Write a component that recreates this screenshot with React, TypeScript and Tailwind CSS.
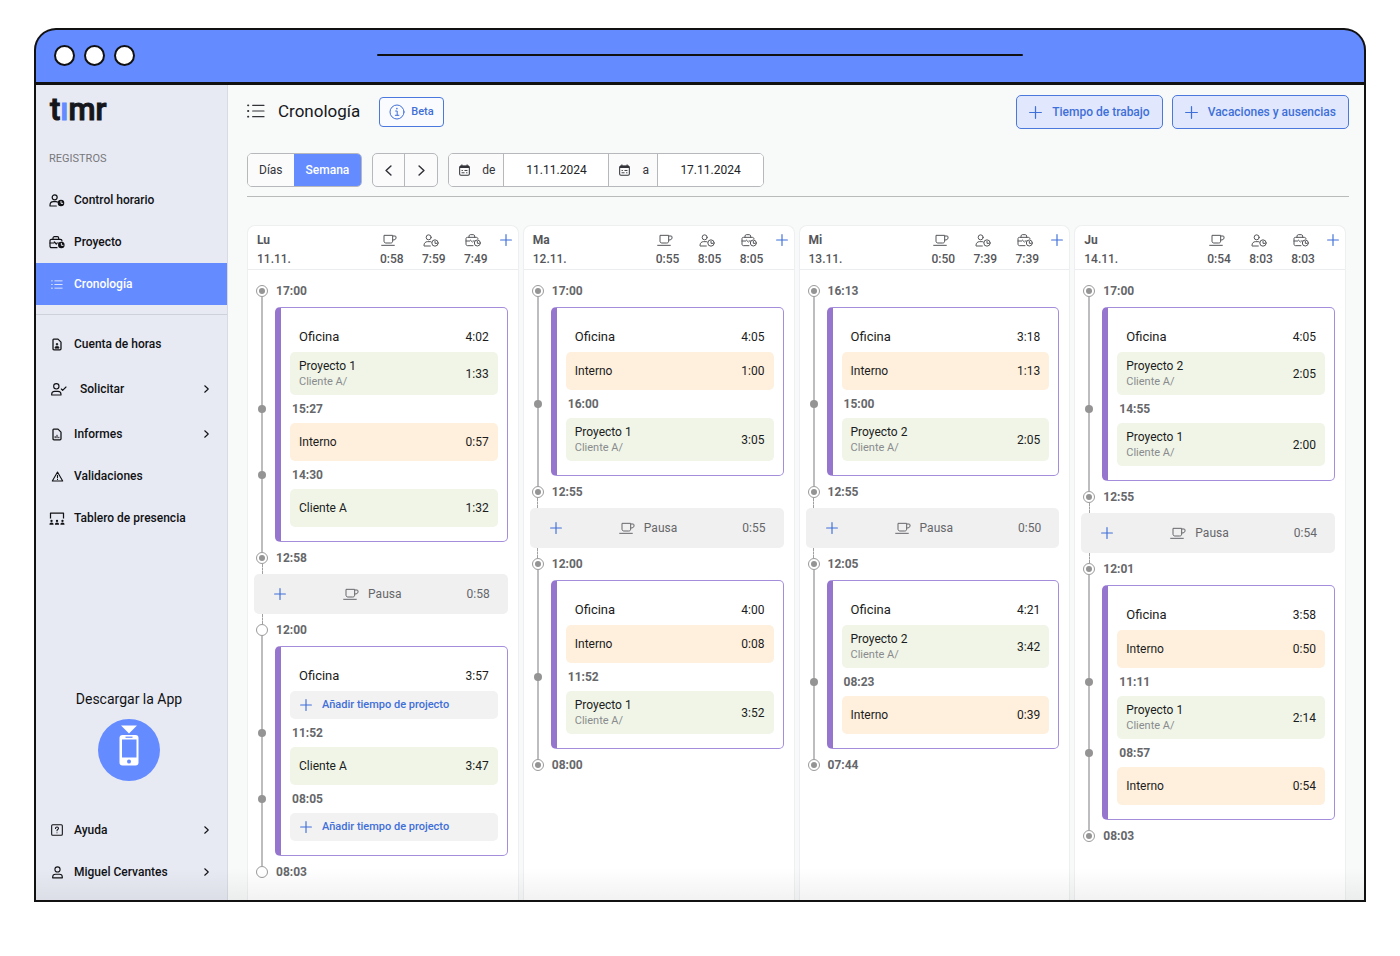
import type { ReactNode } from 'react';

type IconProps = { className?: string };

/* ---------- icons ---------- */

function Cup({ className = 'h-[13px] w-4' }: IconProps) {
  return (
    <svg viewBox="0 0 48 39" fill="none" stroke="currentColor" strokeWidth="3" className={className} aria-hidden="true">
      <path d="M9 4h26v17c0 4-2 6-6 6H15c-4 0-6-2-6-6z" />
      <path d="M35 6h7c2 0 3 1 3 3v3c0 4-4 6-10 6" />
      <path d="M2 34h38" strokeLinecap="round" />
    </svg>
  );
}

function PersonClock({ solid = false }: { solid?: boolean }) {
  return (
    <svg viewBox="0 0 48 39" fill="none" stroke="currentColor" strokeWidth={solid ? 3.6 : 3} strokeLinecap="round" strokeLinejoin="round" className="h-[13px] w-4" aria-hidden="true">
      <circle cx="17" cy="10" r="7.5" />
      <path d="M22 36H3v-2c0-7 5-11 10-11h8c2 0 3 0 4 1" />
      <circle cx="36" cy="27" r={solid ? 8 : 9.5} fill={solid ? 'currentColor' : 'none'} />
      <path d="M36 22v6h5" stroke={solid ? '#e8eaf3' : 'currentColor'} strokeWidth="3" />
    </svg>
  );
}

function CaseClock({ solid = false }: { solid?: boolean }) {
  return (
    <svg viewBox="0 0 48 39" fill="none" stroke="currentColor" strokeWidth={solid ? 3.6 : 3} strokeLinecap="round" strokeLinejoin="round" className="h-[13px] w-4" aria-hidden="true">
      <path d="M12 10V6c0-2 2-4 4-4h9c2 0 4 2 4 4v4" />
      <path d="M24 35H7c-2 0-4-2-4-4V14c0-3 2-4 4-4h27c3 0 5 2 5 5" />
      <path d="M3 21h11M16 18l6 6M24 21h4" />
      <circle cx="37" cy="27" r={solid ? 8 : 9} fill={solid ? 'currentColor' : 'none'} />
      <path d="M37 22v6h5" stroke={solid ? '#e8eaf3' : 'currentColor'} strokeWidth="3" />
    </svg>
  );
}

function Plus({ className = 'size-3' }: IconProps) {
  return (
    <svg viewBox="0 0 12 12" stroke="currentColor" strokeWidth="1.15" strokeLinecap="round" className={className} aria-hidden="true">
      <path d="M6 .6v10.8M.6 6h10.8" />
    </svg>
  );
}

function ListIcon({ className }: IconProps) {
  return (
    <svg viewBox="0 0 54 42" fill="none" stroke="currentColor" strokeWidth="3.6" strokeLinecap="round" className={className} aria-hidden="true">
      <path d="M17 4h34M17 21h34M17 38h34" />
      <path d="M3 4h1M3 21h1M3 38h1" strokeWidth="5.5" />
    </svg>
  );
}

function DocIcon({ children }: { children: ReactNode }) {
  return (
    <svg viewBox="0 0 30 38" fill="none" stroke="currentColor" strokeWidth="3.8" strokeLinejoin="round" className="h-[13px] w-[10px]" aria-hidden="true">
      <path d="M5 3h13l9 9v20c0 2-1 3-3 3H6c-2 0-3-1-3-3V5c0-1 1-2 2-2z" />
      {children}
    </svg>
  );
}

function PersonCheck() {
  return (
    <svg viewBox="0 0 48 39" fill="none" stroke="currentColor" strokeWidth="3.4" strokeLinecap="round" strokeLinejoin="round" className="h-[13px] w-4" aria-hidden="true">
      <circle cx="16" cy="10" r="8" />
      <path d="M2 36v-2c0-6 4-9 9-9h10c5 0 9 3 9 9v2z" />
      <path d="M31 18l4 4 10-10" />
    </svg>
  );
}

function Warning() {
  return (
    <svg viewBox="0 0 38 34" fill="none" stroke="currentColor" strokeWidth="3.4" strokeLinecap="round" strokeLinejoin="round" className="h-[11px] w-[13px]" aria-hidden="true">
      <path d="M19 3L35 31H3z" />
      <path d="M19 13v8M19 26v.5" />
    </svg>
  );
}

function Board() {
  return (
    <svg viewBox="0 0 46 38" fill="currentColor" className="h-[13px] w-4" aria-hidden="true">
      <path d="M4 19V3h38v16" fill="none" stroke="currentColor" strokeWidth="3.6" strokeLinejoin="round" />
      <circle cx="7" cy="26" r="3.4" />
      <circle cx="23" cy="26" r="3.4" />
      <circle cx="39" cy="26" r="3.4" />
      <path d="M1 37c0-4 2-6 6-6s6 2 6 6zM17 37c0-4 2-6 6-6s6 2 6 6zM33 37c0-4 2-6 6-6s6 2 6 6z" />
    </svg>
  );
}

function Help() {
  return (
    <svg viewBox="0 0 36 36" fill="none" stroke="currentColor" strokeWidth="3.2" strokeLinecap="round" strokeLinejoin="round" className="size-3" aria-hidden="true">
      <rect x="2" y="2" width="32" height="32" rx="3" />
      <path d="M13.500 13.500c0-3 2-4.500 4.500-4.500s4.500 1.500 4.500 4.200c0 3-4.500 3.300-4.500 7M18 26.200v.3" />
    </svg>
  );
}

function Person() {
  return (
    <svg viewBox="0 0 34 39" fill="none" stroke="currentColor" strokeWidth="3.4" strokeLinejoin="round" className="h-[13px] w-[11px]" aria-hidden="true">
      <circle cx="17" cy="10" r="8" />
      <path d="M2 36v-2c0-6 4-9 9-9h12c5 0 9 3 9 9v2z" />
    </svg>
  );
}

function Chevron({ className = 'h-2 w-[5px]', flip = false }: IconProps & { flip?: boolean }) {
  return (
    <svg viewBox="0 0 10 16" fill="none" stroke="currentColor" strokeWidth="2.200" strokeLinecap="round" strokeLinejoin="round" className={className} aria-hidden="true">
      <path d={flip ? 'M8.500 1.500L1.500 8l7 6.500' : 'M1.500 1.500l7 6.500-7 6.500'} />
    </svg>
  );
}

function Calendar() {
  return (
    <svg viewBox="0 0 34 37" fill="none" stroke="currentColor" strokeWidth="3.2" strokeLinejoin="round" className="h-3 w-[11px]" aria-hidden="true">
      <rect x="2" y="6" width="30" height="29" rx="4" />
      <path d="M3 9h28" strokeWidth="7" />
      <path d="M9 2v6M25 2v6" strokeLinecap="round" />
      <path d="M17 20h9M8 20h4M8 27h9M22 27h4" strokeWidth="2.800" />
    </svg>
  );
}

function Info() {
  return (
    <svg viewBox="0 0 16 16" fill="none" stroke="currentColor" strokeLinecap="round" className="size-4" aria-hidden="true">
      <circle cx="8" cy="8" r="7" strokeWidth="1" />
      <path d="M6.600 7H8.200v4.200M6.300 11.300h3.600" strokeWidth="1" />
      <path d="M7.900 4.600v.1" strokeWidth="1.500" />
    </svg>
  );
}

function PhoneBadge() {
  return (
    <svg viewBox="0 0 62 62" className="size-[62px]" aria-hidden="true">
      <circle cx="31" cy="31" r="31" fill="#648bff" />
      <path d="M23 6.500h16l-8 8z" fill="#fff" />
      <rect x="21.500" y="16" width="19" height="30.500" rx="3" fill="#fff" />
      <rect x="24" y="20.500" width="14.500" height="18" fill="#648bff" />
      <rect x="27.500" y="17.600" width="7" height="1.200" fill="#648bff" />
      <circle cx="31" cy="42.500" r="2" fill="#648bff" />
    </svg>
  );
}

/* ---------- sidebar ---------- */

type NavProps = { icon: ReactNode; label: string; active?: boolean; chevron?: boolean; wide?: boolean };

function NavItem({ icon, label, active, chevron, wide }: NavProps) {
  return (
    <a
      href="#"
      aria-current={active ? 'page' : undefined}
      className={`flex items-center pr-[18px] text-xs font-medium ${wide ? 'h-12 pl-[15px]' : 'h-[42px] pl-[13px]'} ${
        active ? 'bg-[#648bff] text-white' : 'text-[#101114]'
      }`}
    >
      <span className={`flex w-4 shrink-0 justify-center ${wide ? 'mr-[13px]' : 'mr-[9px]'}`}>{icon}</span>
      <span className="flex-1">{label}</span>
      {chevron && <Chevron />}
    </a>
  );
}

function Sidebar() {
  return (
    <aside className="flex w-[192px] shrink-0 flex-col border-r border-[#d9dbe4] bg-[#e8eaf3]">
      <div className="px-[14px] pt-[5px] text-[31px] leading-10 font-medium text-[#15171c] [-webkit-text-stroke:1px_#15171c]">
        t<span className="text-[#648bff] [-webkit-text-stroke:1px_#648bff]">ı</span>mr
      </div>
      <h2 className="mt-[19px] px-[13px] text-[11px] leading-5 text-[#77787c]">REGISTROS</h2>
      <nav className="mt-[10px] flex flex-1 flex-col pb-[7px]">
        <NavItem icon={<PersonClock solid />} label="Control horario" />
        <NavItem icon={<CaseClock solid />} label="Proyecto" />
        <NavItem icon={<ListIcon className="h-[9px] w-3" />} label="Cronología" active />
        <hr className="mt-[9px] mb-2 border-[#cfd1da]" />
        <NavItem
          icon={
            <DocIcon>
              <circle cx="15" cy="18" r="2.500" fill="currentColor" strokeWidth="2" />
              <path d="M9 30c0-4 2-6 6-6s6 2 6 6z" fill="currentColor" strokeWidth="2" />
            </DocIcon>
          }
          label="Cuenta de horas"
        />
        <NavItem icon={<PersonCheck />} label="Solicitar" chevron wide />
        <NavItem
          icon={
            <DocIcon>
              <path d="M9.500 24v6M15 20v10M20.500 26v4" strokeWidth="3" />
            </DocIcon>
          }
          label="Informes"
          chevron
        />
        <NavItem icon={<Warning />} label="Validaciones" />
        <NavItem icon={<Board />} label="Tablero de presencia" />
        <a href="#" className="mt-auto mb-7 flex flex-col items-center gap-[10px] pr-[5px] text-sm leading-5 text-[#101114]">
          Descargar la App
          <PhoneBadge />
        </a>
        <NavItem icon={<Help />} label="Ayuda" chevron />
        <NavItem icon={<Person />} label="Miguel Cervantes" chevron />
      </nav>
    </aside>
  );
}

/* ---------- toolbar ---------- */

function DateField({ label, id, value }: { label: string; id: string; value: string }) {
  return (
    <>
      <label htmlFor={id} className="flex items-center gap-3 border-r border-[#b6b8bc] bg-[#fbfbfc] pr-2 pl-[10px] text-[#333439]">
        <Calendar />
        {label}
      </label>
      <input id={id} defaultValue={value} className="w-[105px] border-r border-[#b6b8bc] bg-white text-center text-[#222327] last:border-r-0" />
    </>
  );
}

function Toolbar() {
  const add = 'flex h-[34px] items-center gap-[10px] rounded-[5px] border border-[#4a78dc] bg-[#e1e8fd] px-3 text-xs font-medium text-[#3f6fd8]';
  return (
    <header className="border-b border-[#b9babc] pb-[9px]">
      <div className="flex items-center">
        <div className="flex items-center gap-[13px] pb-[3px]">
          <ListIcon className="h-[14px] w-[18px] text-[#333439]" />
          <h1 className="text-[17px] leading-6 text-[#15171c]">Cronología</h1>
        </div>
        <button className="ml-[19px] flex h-[30px] items-center gap-[6px] rounded-[4px] border border-[#4a78dc] bg-[#fafbfe] px-[9px] text-[11px] font-medium text-[#3f6fd8]">
          <Info />
          Beta
        </button>
        <div className="ml-auto flex gap-[9px]">
          <button className={add}>
            <Plus className="size-[13px]" />
            Tiempo de trabajo
          </button>
          <button className={add}>
            <Plus className="size-[13px]" />
            Vacaciones y ausencias
          </button>
        </div>
      </div>
      <div className="mt-6 flex h-[34px] gap-[10px] text-xs text-[#333439]">
        <div className="flex overflow-hidden rounded-[5px] border border-[#b6b8bc]">
          <button className="bg-[#fbfbfc] px-[11px]">Días</button>
          <button className="bg-[#648bff] px-3 font-medium text-white">Semana</button>
        </div>
        <div className="flex overflow-hidden rounded-[5px] border border-[#b6b8bc] bg-[#fbfbfc]">
          <button aria-label="Anterior" className="flex w-8 items-center justify-center border-r border-[#b6b8bc]">
            <Chevron className="h-[11px] w-[7px]" flip />
          </button>
          <button aria-label="Siguiente" className="flex w-8 items-center justify-center">
            <Chevron className="h-[11px] w-[7px]" />
          </button>
        </div>
        <div className="flex overflow-hidden rounded-[5px] border border-[#b6b8bc]">
          <DateField label="de" id="from" value="11.11.2024" />
          <DateField label="a" id="to" value="17.11.2024" />
        </div>
      </div>
    </header>
  );
}

/* ---------- timeline ---------- */

type Entry =
  | { kind: 'project'; name: string; client?: string; time: string }
  | { kind: 'internal'; time: string }
  | { kind: 'add' }
  | { kind: 'mark'; at: string };

type Step =
  | { kind: 'node'; at: string; hollow?: boolean }
  | { kind: 'work'; time: string; entries: Entry[] }
  | { kind: 'pause'; time: string };

type Day = { name: string; date: string; totals: [string, string, string]; steps: Step[] };

const project = (name: string, time: string, client?: string): Entry => ({ kind: 'project', name, time, client });
const internal = (time: string): Entry => ({ kind: 'internal', time });
const mark = (at: string): Entry => ({ kind: 'mark', at });
const node = (at: string, hollow = false): Step => ({ kind: 'node', at, hollow });
const work = (time: string, ...entries: Entry[]): Step => ({ kind: 'work', time, entries });
const pause = (time: string): Step => ({ kind: 'pause', time });

const days: Day[] = [
  {
    name: 'Lu',
    date: '11.11.',
    totals: ['0:58', '7:59', '7:49'],
    steps: [
      node('17:00'),
      work('4:02', project('Proyecto 1', '1:33', 'Cliente A/'), mark('15:27'), internal('0:57'), mark('14:30'), project('Cliente A', '1:32')),
      node('12:58'),
      pause('0:58'),
      node('12:00', true),
      work('3:57', { kind: 'add' }, mark('11:52'), project('Cliente A', '3:47'), mark('08:05'), { kind: 'add' }),
      node('08:03', true),
    ],
  },
  {
    name: 'Ma',
    date: '12.11.',
    totals: ['0:55', '8:05', '8:05'],
    steps: [
      node('17:00'),
      work('4:05', internal('1:00'), mark('16:00'), project('Proyecto 1', '3:05', 'Cliente A/')),
      node('12:55'),
      pause('0:55'),
      node('12:00'),
      work('4:00', internal('0:08'), mark('11:52'), project('Proyecto 1', '3:52', 'Cliente A/')),
      node('08:00'),
    ],
  },
  {
    name: 'Mi',
    date: '13.11.',
    totals: ['0:50', '7:39', '7:39'],
    steps: [
      node('16:13'),
      work('3:18', internal('1:13'), mark('15:00'), project('Proyecto 2', '2:05', 'Cliente A/')),
      node('12:55'),
      pause('0:50'),
      node('12:05'),
      work('4:21', project('Proyecto 2', '3:42', 'Cliente A/'), mark('08:23'), internal('0:39')),
      node('07:44'),
    ],
  },
  {
    name: 'Ju',
    date: '14.11.',
    totals: ['0:54', '8:03', '8:03'],
    steps: [
      node('17:00'),
      work('4:05', project('Proyecto 2', '2:05', 'Cliente A/'), mark('14:55'), project('Proyecto 1', '2:00', 'Cliente A/')),
      node('12:55'),
      pause('0:54'),
      node('12:01'),
      work('3:58', internal('0:50'), mark('11:11'), project('Proyecto 1', '2:14', 'Cliente A/'), mark('08:57'), internal('0:54')),
      node('08:03'),
    ],
  },
];

function Link({ to }: { to?: Step }) {
  if (!to) return <span className="flex-1" />;
  return to.kind === 'work' ? (
    <span className="w-[2px] flex-1 bg-[#bdbdc0]" />
  ) : (
    <span className="flex-1 border-l border-dashed border-[#a0a0a0]" />
  );
}

function NodeRow({ at, hollow, prev, next }: { at: string; hollow?: boolean; prev?: Step; next?: Step }) {
  return (
    <div className="flex h-8 items-center gap-[6px]">
      <div className="flex w-4 flex-col items-center self-stretch">
        <Link to={prev} />
        <span className="flex size-3 items-center justify-center rounded-full border border-[#9a9a9a] bg-white">
          {!hollow && <span className="size-[6px] rounded-full bg-[#949494]" />}
        </span>
        <Link to={next} />
      </div>
      <time className="font-bold text-[#66676a]">{at}</time>
    </div>
  );
}

function EntryRow({ entry }: { entry: Entry }) {
  if (entry.kind === 'mark') {
    return (
      <div className="relative flex h-7 items-center pl-[2px] font-bold text-[#66676a]">
        <span className="absolute top-[10px] -left-8 size-2 rounded-full bg-[#949494]" />
        <time>{entry.at}</time>
      </div>
    );
  }
  if (entry.kind === 'add') {
    return (
      <button className="flex h-7 w-full items-center gap-[10px] rounded-[5px] bg-[#f2f2f3] px-[10px] text-[11px] font-medium text-[#3f6fd8]">
        <Plus />
        Añadir tiempo de projecto
      </button>
    );
  }
  if (entry.kind === 'internal') {
    return (
      <div className="flex h-[38px] items-center justify-between rounded-[5px] bg-[#fff0de] px-[9px]">
        <span>Interno</span>
        <span>{entry.time}</span>
      </div>
    );
  }
  return (
    <div className={`flex items-center justify-between rounded-[5px] bg-[#f0f5e8] px-[9px] ${entry.client ? 'h-[43px]' : 'h-[38px]'}`}>
      <div className="leading-[15px]">
        <p>{entry.name}</p>
        {entry.client && <p className="text-[11px] text-[#8a8b8d]">{entry.client}</p>}
      </div>
      <span>{entry.time}</span>
    </div>
  );
}

function StepView({ step, prev, next }: { step: Step; prev?: Step; next?: Step }) {
  if (step.kind === 'node') return <NodeRow at={step.at} hollow={step.hollow} prev={prev} next={next} />;
  if (step.kind === 'pause') {
    return (
      <div className="flex h-10 items-center rounded-[5px] bg-[#f0f0f1] pr-[18px] pl-5 text-[#66676a]">
        <button aria-label="Añadir" className="text-[#3f6fd8]">
          <Plus />
        </button>
        <span className="flex flex-1 items-center justify-center gap-[9px] pr-2">
          <Cup />
          Pausa
        </span>
        <span>{step.time}</span>
      </div>
    );
  }
  return (
    <div className="flex">
      <div className="flex w-4 shrink-0 justify-center">
        <span className="w-[2px] bg-[#bdbdc0]" />
      </div>
      <div className="ml-[5px] flex-1 rounded-[5px] border border-l-[6px] border-[#a48ddb] border-l-[#9575cd] bg-white px-[9px] py-[14px]">
        <div className="flex h-[30px] items-center justify-between px-[9px]">
          <span className="text-[13px]">Oficina</span>
          <span>{step.time}</span>
        </div>
        {step.entries.map((entry, i) => (
          <EntryRow key={i} entry={entry} />
        ))}
      </div>
    </div>
  );
}

function DayColumn({ day }: { day: Day }) {
  const icons = [<Cup key="c" />, <PersonClock key="p" />, <CaseClock key="b" />];
  return (
    <section className="rounded-t-[8px] border border-b-0 border-[#eeeff0] bg-white text-xs text-[#1b1c20]">
      <div className="flex border-b border-[#ecedee] pt-[5px] pr-[6px] pl-[9px] leading-[19px] text-[#55565a]">
        <div className="flex-1">
          <h3 className="font-bold">{day.name}</h3>
          <p className="font-medium">{day.date}</p>
        </div>
        {day.totals.map((total, i) => (
          <div key={i} className="w-[42px] text-center">
            <span className="flex h-[19px] items-center justify-center pr-[5px] pb-px">{icons[i]}</span>
            <span className="font-medium">{total}</span>
          </div>
        ))}
        <button aria-label="Añadir" className="ml-[3px] flex h-[18px] items-center text-[#3f6fd8]">
          <Plus />
        </button>
      </div>
      <div className="pt-[5px] pr-[10px] pb-3 pl-[6px]">
        {day.steps.map((step, i) => (
          <StepView key={i} step={step} prev={day.steps[i - 1]} next={day.steps[i + 1]} />
        ))}
      </div>
    </section>
  );
}

/* ---------- page ---------- */

export default function App() {
  return (
    <div className="flex min-h-screen flex-col bg-white px-[34px] pt-7 pb-[54px] font-['Roboto',sans-serif]">
      <div className="grid h-[57px] shrink-0 grid-cols-[1fr_2fr_1fr] items-center rounded-t-[22px] border-2 border-b-[3px] border-[#111] bg-[#648bff] px-[18px] pb-[2px]">
        <div className="flex gap-[9px]">
          <span className="size-[21px] rounded-full border-2 border-[#111] bg-white" />
          <span className="size-[21px] rounded-full border-2 border-[#111] bg-white" />
          <span className="size-[21px] rounded-full border-2 border-[#111] bg-white" />
        </div>
        <span className="h-[2px] rounded-full bg-[#111]" />
      </div>
      <div className="relative flex flex-1 border-2 border-t-0 border-[#111]">
        <Sidebar />
        <main className="flex min-w-0 flex-1 flex-col bg-[#f8f9f9] pt-[10px] pr-[15px] pl-[19px]">
          <Toolbar />
          <div className="mt-7 mr-[3px] grid flex-1 grid-cols-4 gap-1">
            {days.map((day) => (
              <DayColumn key={day.name} day={day} />
            ))}
          </div>
        </main>
        <div className="pointer-events-none absolute inset-x-0 bottom-0 h-8 bg-linear-to-b from-transparent to-black/5" />
      </div>
    </div>
  );
}
